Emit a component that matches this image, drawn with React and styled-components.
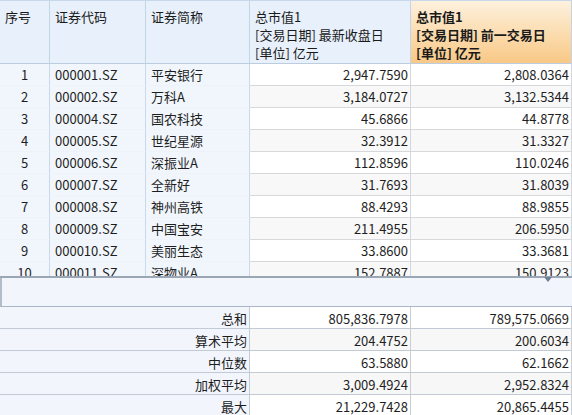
import { styled, createGlobalStyle } from "styled-components"

const GlobalStyle = createGlobalStyle`
  body {
    margin: 0;
    background: #fff;
    font-family: "Noto Sans CJK SC", "Microsoft YaHei", sans-serif;
    font-size: 13px;
    color: #1e1e1e;
  }
`

const COLS = "50px 96px 104px 161px 161px"

const Frame = styled.div`
  width: 572px;
  height: 415px;
  overflow: hidden;
  display: flex;
  flex-direction: column;
  border-top: 1px solid #c8d7ea;
  box-sizing: border-box;
`

const Sheet = styled.div`
  height: 275px;
  flex-shrink: 0;
  overflow: hidden;
`

const Grid = styled.div`
  display: grid;
  grid-template-columns: ${COLS};
`

const HeadCell = styled.div`
  box-sizing: border-box;
  height: 63px;
  padding: 7px 5px 0;
  line-height: 18px;
  white-space: nowrap;
  background: ${(p) => (p.$hl ? "linear-gradient(#fdf1de, #fbd9a8 60%, #f8c887)" : "#e7f0fb")};
  font-weight: ${(p) => (p.$hl ? "bold" : "normal")};
  border-right: 1px solid #c4d4e7;
  border-bottom: 1px solid #bccddf;
  color: #1a1a1a;
`

const Cell = styled.div`
  box-sizing: border-box;
  height: 22px;
  padding-top: 1px;
  line-height: 20px;
  white-space: nowrap;
  overflow: hidden;
  padding-left: ${(p) => (p.$align === "right" ? "2px" : "5px")};
  padding-right: ${(p) => (p.$align === "right" ? "2px" : "5px")};
  text-align: ${(p) => p.$align || "left"};
  border-right: 1px solid ${(p) => (p.$frozen ? "#c9d8ea" : "#d3d6da")};
  border-bottom: 1px solid ${(p) => (p.$frozen ? "#eef3fa" : "#d6d8db")};
  background: ${(p) => (p.$frozen ? "#f1f6fc" : p.$alt ? "#f8f8f8" : "#fff")};
`

const ScrollTrack = styled.div`
  position: relative;
  height: 2px;
  flex-shrink: 0;
  background: #9ca7b6;
`

const Marker = styled.div`
  position: absolute;
  left: 544px;
  top: 1px;
  width: 0;
  height: 0;
  border-left: 4px solid transparent;
  border-right: 4px solid transparent;
  border-top: 5px solid #6f7f94;
`

const Band = styled.div`
  height: 28px;
  flex-shrink: 0;
  background: #f2f6fc;
  border-left: 2px solid #b3bdca;
  border-bottom: 1px solid #aab6c5;
`

const SumGrid = styled.div`
  display: grid;
  grid-template-columns: 250px 161px 161px;
`

const SumLabel = styled.div`
  box-sizing: border-box;
  height: 22px;
  padding-top: 2px;
  line-height: 19px;
  padding-right: 2px;
  text-align: right;
  white-space: nowrap;
  overflow: hidden;
  background: #f2f6fc;
  border-right: 1px solid #c3cbd6;
  border-bottom: 1px solid #c2cad5;
`

const SumValue = styled.div`
  box-sizing: border-box;
  height: 22px;
  padding-top: 2px;
  line-height: 19px;
  padding-right: 2px;
  text-align: right;
  white-space: nowrap;
  overflow: hidden;
  background: ${(p) => (p.$alt ? "#f7f7f7" : "#fff")};
  border-right: 1px solid #c9ced5;
  border-bottom: 1px solid #c2cad5;
`

const rows = [
  ["000001.SZ", "平安银行", "2,947.7590", "2,808.0364"],
  ["000002.SZ", "万科A", "3,184.0727", "3,132.5344"],
  ["000004.SZ", "国农科技", "45.6866", "44.8778"],
  ["000005.SZ", "世纪星源", "32.3912", "31.3327"],
  ["000006.SZ", "深振业A", "112.8596", "110.0246"],
  ["000007.SZ", "全新好", "31.7693", "31.8039"],
  ["000008.SZ", "神州高铁", "88.4293", "88.9855"],
  ["000009.SZ", "中国宝安", "211.4955", "206.5950"],
  ["000010.SZ", "美丽生态", "33.8600", "33.3681"],
  ["000011.SZ", "深物业A", "152.7887", "150.9123"],
]

const summary = [
  ["总和", "805,836.7978", "789,575.0669"],
  ["算术平均", "204.4752", "200.6034"],
  ["中位数", "63.5880", "62.1662"],
  ["加权平均", "3,009.4924", "2,952.8324"],
  ["最大", "21,229.7428", "20,865.4455"],
]

export default function App() {
  return (
    <>
      <GlobalStyle />
      <Frame>
        <Sheet>
          <Grid>
            <HeadCell>序号</HeadCell>
            <HeadCell>证券代码</HeadCell>
            <HeadCell>证券简称</HeadCell>
            <HeadCell>
              总市值1
              <br />
              [交易日期] 最新收盘日
              <br />
              [单位] 亿元
            </HeadCell>
            <HeadCell $hl>
              总市值1
              <br />
              [交易日期] 前一交易日
              <br />
              [单位] 亿元
            </HeadCell>
            {rows.map((r, i) => {
              const alt = i % 2 === 1
              return [
                <Cell key={`n${i}`} $frozen $align="center">
                  {i + 1}
                </Cell>,
                <Cell key={`c${i}`} $frozen>
                  {r[0]}
                </Cell>,
                <Cell key={`s${i}`} $frozen>
                  {r[1]}
                </Cell>,
                <Cell key={`a${i}`} $align="right" $alt={alt}>
                  {r[2]}
                </Cell>,
                <Cell key={`b${i}`} $align="right" $alt={alt}>
                  {r[3]}
                </Cell>,
              ]
            })}
          </Grid>
        </Sheet>
        <ScrollTrack>
          <Marker />
        </ScrollTrack>
        <Band />
        <SumGrid>
          {summary.map((s, i) => [
            <SumLabel key={`l${i}`}>{s[0]}</SumLabel>,
            <SumValue key={`x${i}`} $alt={i % 2 === 1}>
              {s[1]}
            </SumValue>,
            <SumValue key={`y${i}`} $alt={i % 2 === 1}>
              {s[2]}
            </SumValue>,
          ])}
        </SumGrid>
      </Frame>
    </>
  )
}
